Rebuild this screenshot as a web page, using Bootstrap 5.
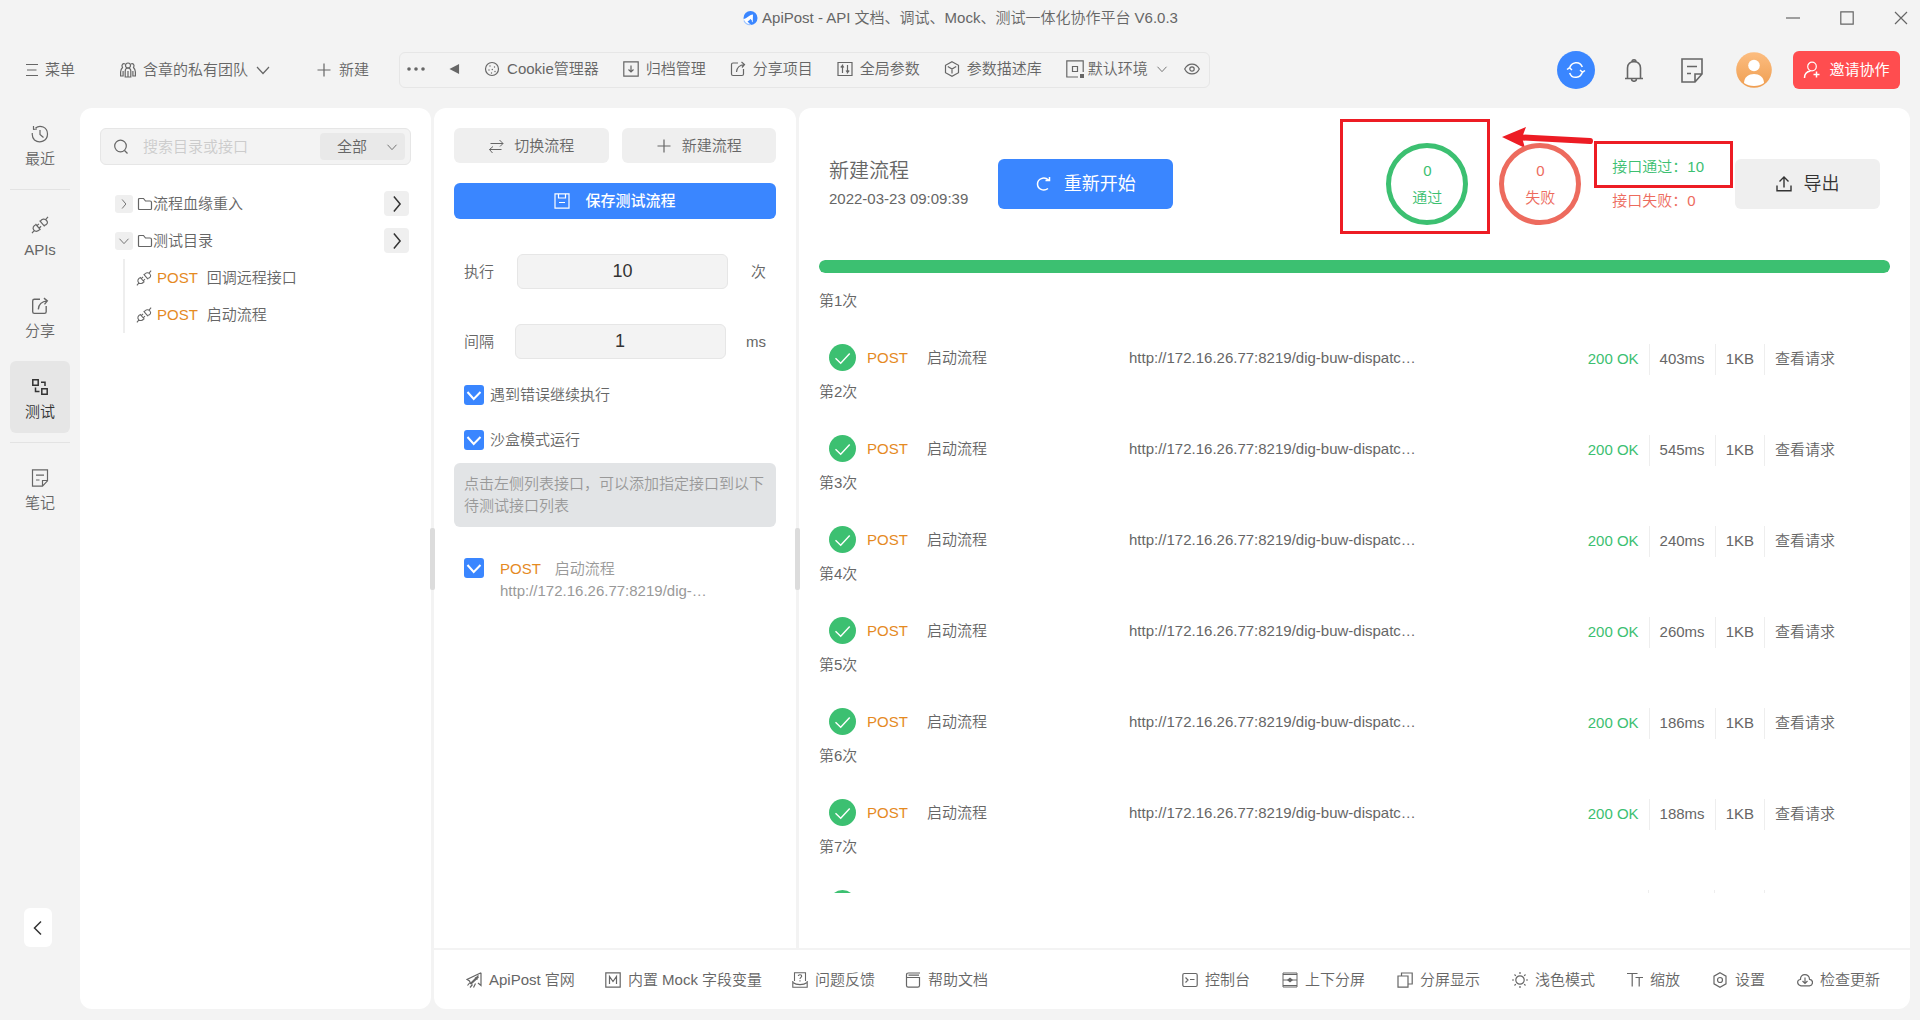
<!DOCTYPE html>
<html lang="zh-CN">
<head>
<meta charset="utf-8">
<meta name="viewport" content="width=device-width, initial-scale=1">
<title>ApiPost - API 文档、调试、Mock、测试一体化协作平台 V6.0.3</title>
<link href="https://cdn.jsdelivr.net/npm/bootstrap@5.3.0/dist/css/bootstrap.min.css" rel="stylesheet">
<style>
:root{--ink:#666;--dark:#333;--bg:#f3f3f3;--soft:#efefef;--line:#e6e6e6;--blue:#3a86ff;--green:#3cc071;--red:#ed6b5e;--orange:#e58a1f;--mark:#ed1c24}
body{font-family:"Liberation Sans","Noto Sans CJK SC",sans-serif;font-size:15px;line-height:22px;font-weight:350;color:var(--ink);background:var(--bg);height:100vh;min-height:700px;overflow:hidden}
button,input,select{font-family:inherit;font-size:inherit;font-weight:inherit;line-height:inherit;color:inherit}
button{border:0;background:none;padding:0;white-space:nowrap}
a{color:inherit;text-decoration:none;white-space:nowrap}
svg{fill:none;stroke:currentColor;stroke-width:1.2;flex:none;display:block}
.ic{width:16px;height:16px}
.titlebar{height:35px}
.winctl{right:12px;top:10px;gap:40px}
.toolbar{height:73px;padding:16px 20px 19px 26px}
.tool{display:inline-flex;align-items:center;gap:7px}
.tool-next{margin-left:45px}
.toolbox{height:36px;border:1px solid var(--line);border-radius:6px;padding:0 9px 2px 7px;margin-left:30px}
.syncbtn{width:38px;height:38px;border-radius:50%;background:var(--blue);color:#fff}
.invite{height:38px;width:107px;border-radius:6px;background:#ff4d4f;color:#fff;gap:8px;font-weight:400}
.rail{width:80px;padding:0 10px;gap:9px}
.railitem{width:60px;height:72px;border-radius:6px;gap:5px;padding-top:6px}
.railitem.active{background:#e6e6e6;color:var(--dark)}
.railitem svg{width:18px;height:18px}
.rail hr{margin:0;width:60px;height:1px;border:0;background:#dedede;opacity:.8}
.foldbtn{width:28px;height:39px;border-radius:6px;background:#fff;margin:auto auto 73px 14px;color:var(--dark)}
.pane{background:#fff;border-radius:12px 12px 0 0;min-height:0;min-width:0}
.pane-tree{width:351px;border-radius:12px;padding:20px}
.pane-flow{width:362px;padding:20px}
.pane-run{padding:35px 20px 55px}
.gutter{width:3px;position:relative;z-index:2}
.gutter span{position:absolute;left:-1px;top:420px;width:5px;height:62px;border-radius:2px;background:#dcdcdc}
.searchbox{height:37px;border:1px solid var(--line);border-radius:6px;background:var(--bg);padding:4px 5px 4px 12px}
.searchbox input{border:0;background:none;outline:0;width:0;min-width:0;padding:0 0 0 14px}
.searchbox input::placeholder{color:#ccc;opacity:1}
.scope{width:85px;height:27px;position:relative;flex:none}
.scope select{appearance:none;border:0;background:#e9e9e9;border-radius:4px;width:100%;height:27px;padding:0 17px}
.scope svg{position:absolute;right:7px;top:8px;pointer-events:none}
.tree{padding:20px 2px 0 15px}
.node{height:37px}
.node .verb{margin:0 9px 0 5px}
.caret{width:18px;height:18px;border-radius:3px;background:var(--soft)}
.more{width:25px;height:25px;border-radius:4px;background:var(--soft);color:var(--dark)}
.kids{border-left:2px solid #eee;margin-left:8px;padding-left:11px}
.verb{color:var(--orange)}
.greybtn{height:35px;border-radius:6px;background:var(--soft);gap:10px}
.savebtn{height:36px;border-radius:6px;background:var(--blue);color:#fff;gap:15px;font-weight:500;margin-top:20px}
.field{margin:35px 10px 0}
.optrow{gap:6px;margin:25px 10px 0}
.numin{width:211px;height:35px;border:1px solid var(--line);border-radius:6px;background:var(--bg);text-align:center;font-size:18px;color:var(--dark);padding:0}
.form-check-input.tick{width:20px;height:20px;margin:0;border:0;border-radius:3px;flex:none;background-size:20px}
.tick:checked{background-color:var(--blue);background-image:url("data:image/svg+xml,%3csvg xmlns='http://www.w3.org/2000/svg' viewBox='0 0 20 20'%3e%3cpath fill='none' stroke='%23fff' stroke-width='2' d='M3.5 7l6.2 7L16.500 7'/%3e%3c/svg%3e")}
.hint{background:#e2e4e6;color:#999;border-radius:6px;padding:10px;margin-top:12px}
.picked{gap:16px;margin:31px 10px 0;color:#999}
.picked .verb{margin-right:14px}
.flowtitle{font-size:20px;line-height:26px}
.bigbtn{height:50px;border-radius:6px;font-size:18px;gap:12px}
.restart{width:175px;background:var(--blue);color:#fff;font-weight:400;margin-left:30px}
.export{width:145px;background:var(--soft);color:var(--dark)}
.runhead{padding:0 10px}
.ring{width:82px;height:82px;border:5px solid;border-radius:50%;gap:5px;position:relative}
.ok{color:var(--green)}
.bad{color:var(--red)}
.statgap{gap:31px}
.stats{gap:12px;white-space:nowrap}
.outline-a,.outline-b{position:absolute;border:3px solid var(--mark)}
.outline-a{left:-51px;top:-29px;width:150px;height:115px}
.outline-b{left:-18px;top:-15px;width:139px;height:47px}
.pointer{position:absolute;left:111px;top:-23px}
.progress.runbar{height:13px;border-radius:6px;margin:35px 0 17px;flex:none}
.runbar .progress-bar{background:var(--green);border-radius:6px}
.rounds{overflow:hidden;min-height:0}
.hit{height:31px;margin:32px 45px 6px 10px;padding-right:10px}
.badgeok{width:27px;height:27px;border-radius:50%;background:var(--green);color:#fff;flex:none}
.reqinfo{padding:3px 0 0 11px;min-width:0}
.reqinfo .verb{width:60px;flex:none}
.reqname{width:202px;flex:none}
.cell{padding:0 10px;border-left:1px solid #eee;height:31px;line-height:30px;white-space:nowrap}
.cell:first-child{border:0}
.cell:last-child{padding-right:0}
.cell:empty{width:66px}
.cell:empty:nth-child(3){width:50px}
.cell:empty:last-child{width:71px}
.statusbar{height:59px;background:#fff;border-radius:0 0 12px 12px;margin-top:2px;padding:0 30px 0 32px}
.statusbar .links{gap:30px}
.statusbar .modes{gap:32px}
.statusbar a,.statusbar button{display:inline-flex;align-items:center;gap:7px}
.work{margin:0 10px 11px 0;min-height:0;min-width:0}
</style>
</head>
<body class="d-flex flex-column">
<svg class="d-none" aria-hidden="true">
  <symbol id="plug" viewBox="0 0 18 18"><path d="M1 17.200l2.600-3M17 .8l-2.600 3M9.300 5.400l3.600 4.200c3.300-.9 4.600-2.900 2.700-5.100s-4.700-1.800-6.300 .9zM8.600 4.600l5 5.800M4.500 8l5 5.800M5.100 8.500c-2.700 1.200-4 3.600-2.200 5.600s4.500 1.300 6-1M6 9.700l1.900-1.900M8.100 12.200l2-1.900"/></symbol>
  <symbol id="folder" viewBox="0 0 16 16"><path d="M1.500 12.500v-9q0-1 1-1h4l2 2.500h4.500q1.500 0 1.500 1.500v6q0 1-1 1h-11q-1 0-1-1z"/></symbol>
  <symbol id="right" viewBox="0 0 16 16"><path d="M5.500 2l5 6-5 6"/></symbol>
  <symbol id="down" viewBox="0 0 16 16"><path d="M2 5l6 6.500L14 5"/></symbol>
  <symbol id="share" viewBox="0 0 16 16"><path d="M8 2H3q-1.500 0-1.500 1.500v9.500q0 1.500 1.500 1.500h9q1.500 0 1.500-1.500V8M6.500 11c.3-4.500 3-7 8-7.500M11.500 1l3 2.500-2.500 3"/></symbol>
  <symbol id="note" viewBox="0 0 18 18"><path d="M1.500 .8h15v11L11.500 17.200h-10zM11.500 17v-5.500h5M5 6.200h8M5 11h3.500"/></symbol>
  <symbol id="plus" viewBox="0 0 16 16"><path d="M8 1.500v13M1.500 8h13"/></symbol>
  <symbol id="check" viewBox="0 0 27 27"><path d="M6.500 14.200l5.200 5L20.700 9.500" stroke-width="1.400"/></symbol>
</svg>

<header>
  <div class="titlebar d-flex align-items-center justify-content-center position-relative">
    <svg class="me-1" width="16" height="16" viewBox="0 0 16 16"><circle cx="8.500" cy="8" r="7" fill="#3a86ff" stroke="none"/><path d="M1.500 9C5 8.500 7 5 11 4.500l-.3 8L8.500 9.500 5.500 11.500l3 3C5 15.500 1.500 13 1.500 9z" fill="#fff" stroke="none"/><path d="M2 10.500a6.500 6.500 0 0 0 7 4" stroke="#9cc3ff"/><path d="M8 9.500l1.500 1.500" stroke="#3a86ff"/></svg>
    <span>ApiPost - API 文档、调试、Mock、测试一体化协作平台 V6.0.3</span>
    <div class="winctl position-absolute d-flex">
      <button aria-label="最小化"><svg width="14" height="16" viewBox="0 0 14 16"><path d="M0 8h14"/></svg></button>
      <button aria-label="最大化"><svg width="14" height="16" viewBox="0 0 14 16"><path d="M.8 1.800h12.400v12.400H.8z"/></svg></button>
      <button aria-label="关闭"><svg width="14" height="16" viewBox="0 0 14 16"><path d="M1 2l12 12M13 2L1 14"/></svg></button>
    </div>
  </div>
  <nav class="toolbar d-flex align-items-center" aria-label="工具栏">
    <button class="tool"><svg width="12" height="14" viewBox="0 0 12 14"><path d="M0 1.500h12M1 7h9.500M0 12.500h12"/></svg>菜单</button>
    <button class="tool tool-next"><svg class="ic" viewBox="0 0 16 16"><circle cx="8" cy="3.500" r="2.500"/><path d="M5.200 15V9c0-4 5.600-4 5.600 0v6zM5 2c-2-1-4 1-2.500 3.500C1 7 .6 8 .6 10v4h2.500V9M11 2c2-1 4 1 2.500 3.500 1.500 1.500 1.900 2.500 1.900 4.500v4h-2.500V9M8 9v6"/></svg>含章的私有团队<svg class="ic" viewBox="0 0 16 16"><use href="#down"/></svg></button>
    <button class="tool tool-next"><svg class="ic" viewBox="0 0 16 16"><use href="#plus"/></svg>新建</button>
    <div class="toolbox d-flex align-items-center">
      <button aria-label="更多"><svg width="18" height="6" viewBox="0 0 18 6"><g fill="currentColor" stroke="none"><circle cx="2" cy="3" r="1.800"/><circle cx="9" cy="3" r="1.800"/><circle cx="16" cy="3" r="1.800"/></g></svg></button>
      <button class="ms-4" aria-label="收起"><svg width="11" height="12" viewBox="0 0 12 12"><path d="M11 .5v11L.5 6z" fill="currentColor" stroke="none"/></svg></button>
      <div class="d-flex ms-4 gap-4">
        <button class="tool"><svg class="ic" viewBox="0 0 16 16"><circle cx="8" cy="8" r="6.500"/><g fill="currentColor" stroke="none"><circle cx="6" cy="5" r=".7"/><circle cx="10.500" cy="6" r=".7"/><circle cx="5" cy="9" r=".7"/><circle cx="8.300" cy="8.500" r=".7"/><circle cx="7.500" cy="12" r=".7"/><circle cx="11" cy="10.500" r=".7"/></g></svg>Cookie管理器</button>
        <button class="tool"><svg class="ic" viewBox="0 0 16 16"><path d="M.8 .8h14.400v14.400H.8zM8 4.500v6.300M5.500 8.500L8 11l2.500-2.500"/></svg>归档管理</button>
        <button class="tool"><svg class="ic" viewBox="0 0 16 16"><use href="#share"/></svg>分享项目</button>
        <button class="tool"><svg class="ic" viewBox="0 0 16 16"><path d="M1 1.500h14v13H1zM5.500 12V4.500L3.800 6.500M5.500 4.500l1.300 2M10.500 4v7.500l1.700-2M10.500 11.500l-1.400-2"/></svg>全局参数</button>
        <button class="tool"><svg class="ic" viewBox="0 0 16 16"><path d="M8 .8l6.500 3.500v7.400L8 15.200l-6.500-3.500V4.300zM3.800 5.500L8 8l4.200-2.500M8 8v4.500"/></svg>参数描述库</button>
        <button class="tool gap-1"><svg width="18" height="18" viewBox="0 0 18 18"><path d="M12 17H.8V.8h16.400V12M6.500 6.500h5v5h-5z"/><path d="M14 14h4v4h-4z" fill="currentColor" stroke="none"/></svg>默认环境<svg class="ms-1" width="12" height="12" viewBox="0 0 16 16"><use href="#down"/></svg></button>
      </div>
      <button class="ms-3" aria-label="查看环境"><svg width="16" height="12" viewBox="0 0 16 12"><path d="M.7 6C4-.5 12-.5 15.300 6 12 12.500 4 12.500 .7 6z"/><circle cx="8" cy="6" r="2.200"/></svg></button>
    </div>
    <div class="ms-auto d-flex align-items-center">
      <button class="syncbtn d-flex align-items-center justify-content-center" aria-label="同步"><svg width="20" height="18" viewBox="0 0 20 18"><path d="M3.500 7.500C5 .5 14-.5 16.300 6M16.500 10.500C15 17.500 6 18.500 3.700 12M1 8.500l2.500-1.700L6 9M19 9.500l-2.500 1.700L14 9" stroke-width="1.500"/></svg></button>
      <button style="margin-left:29px" aria-label="通知"><svg width="20" height="24" viewBox="0 0 20 24"><path d="M1 20.500h18M3.500 20V10c0-8.500 13-8.500 13 0v10M8 4c0-3 4-3 4 0M7.500 21c0 3 5 3 5 0" stroke-width="1.600"/></svg></button>
      <button style="margin-left:37px" aria-label="便签"><svg width="22" height="25" viewBox="0 0 22 25"><path d="M1 1h20v15l-7 8H1zM14 23.500V16h6.500M6 8.500h10M6 15.500h4" stroke-width="1.600"/></svg></button>
      <button style="margin-left:33px" aria-label="账户"><svg width="36" height="36" viewBox="0 0 36 36"><defs><linearGradient id="av" x2="0" y2="1"><stop stop-color="#fcbd80"/><stop offset="1" stop-color="#ef9e51"/></linearGradient></defs><g stroke="none"><circle cx="18" cy="18" r="17.800" fill="url(#av)"/><circle cx="18" cy="13.500" r="5.800" fill="#fff"/><path d="M8 31c0-12 20-12 20 0-5 4-15 4-20 0z" fill="#fff"/></g></svg></button>
      <button class="invite d-flex align-items-center justify-content-center" style="margin-left:21px"><svg width="18" height="18" viewBox="0 0 18 18"><circle cx="9" cy="5.500" r="4.300"/><path d="M1.500 17c0-4 2.500-6.500 6-7M13.500 10.500v6M10.500 13.500h6" stroke-width="1.500"/></svg>邀请协作</button>
    </div>
  </nav>
</header>

<div class="d-flex flex-grow-1" style="min-height:0">
  <nav class="rail d-flex flex-column align-items-center flex-shrink-0" aria-label="主导航">
    <a class="railitem d-flex flex-column align-items-center justify-content-center" href="#"><svg viewBox="0 0 18 18"><path d="M4.500 3C9-.5 16.500 2 16.500 9s-8 10-13 6C1.500 13 1 11 1.300 8M2.500 4.500V1M2 4.500L6 4M9 5v4.500l3.500 3"/></svg>最近</a>
    <hr>
    <a class="railitem d-flex flex-column align-items-center justify-content-center" href="#"><svg viewBox="0 0 18 18"><use href="#plug"/></svg>APIs</a>
    <a class="railitem d-flex flex-column align-items-center justify-content-center" href="#"><svg viewBox="0 0 16 16"><use href="#share"/></svg>分享</a>
    <a class="railitem active d-flex flex-column align-items-center justify-content-center" href="#" aria-current="page"><svg viewBox="0 0 18 18"><path d="M1.800 1.800h5.400v5.400H1.800zM10.800 10.800h5.400v5.400h-5.400zM10 4.200h4V8M4.500 9.500v4H8.500" stroke-width="1.500"/></svg>测试</a>
    <hr>
    <a class="railitem d-flex flex-column align-items-center justify-content-center" href="#"><svg viewBox="0 0 18 18"><use href="#note"/></svg>笔记</a>
    <button class="foldbtn d-flex align-items-center justify-content-center" aria-label="折叠"><svg class="ic" viewBox="0 0 16 16"><path d="M11 1.500L4.500 8l6.500 6.500" stroke-width="1.500"/></svg></button>
  </nav>

  <div class="work d-flex flex-grow-1">
    <aside class="pane pane-tree flex-shrink-0">
      <div class="searchbox d-flex align-items-center">
        <svg class="ic" viewBox="0 0 16 16"><circle cx="7.500" cy="7" r="5.800"/><path d="M11.500 11.500L14.500 14.500"/></svg>
        <input class="flex-grow-1" type="text" placeholder="搜索目录或接口" aria-label="搜索目录或接口">
        <div class="scope"><select aria-label="范围"><option>全部</option></select><svg width="12" height="12" viewBox="0 0 16 16"><use href="#down"/></svg></div>
      </div>
      <div class="tree">
        <div class="node d-flex align-items-center">
          <button class="caret d-flex align-items-center justify-content-center me-1" aria-label="展开"><svg width="12" height="12" viewBox="0 0 16 16"><use href="#right"/></svg></button>
          <svg class="ic" viewBox="0 0 16 16"><use href="#folder"/></svg><span>流程血缘重入</span>
          <button class="more ms-auto d-flex align-items-center justify-content-center" aria-label="添加"><svg width="20" height="20" viewBox="0 0 16 16"><use href="#right"/></svg></button>
        </div>
        <div class="node d-flex align-items-center">
          <button class="caret d-flex align-items-center justify-content-center me-1" aria-label="收起"><svg width="12" height="12" viewBox="0 0 16 16"><use href="#down"/></svg></button>
          <svg class="ic" viewBox="0 0 16 16"><use href="#folder"/></svg><span>测试目录</span>
          <button class="more ms-auto d-flex align-items-center justify-content-center" aria-label="添加"><svg width="20" height="20" viewBox="0 0 16 16"><use href="#right"/></svg></button>
        </div>
        <div class="kids">
          <a class="node d-flex align-items-center" href="#"><svg class="ic" viewBox="0 0 18 18"><use href="#plug"/></svg><span class="verb">POST</span>回调远程接口</a>
          <a class="node d-flex align-items-center" href="#"><svg class="ic" viewBox="0 0 18 18"><use href="#plug"/></svg><span class="verb">POST</span>启动流程</a>
        </div>
      </div>
    </aside>
    <div class="gutter flex-shrink-0"><span></span></div>

    <div class="d-flex flex-column flex-grow-1" style="min-width:0">
      <div class="d-flex flex-grow-1" style="min-height:0">
        <section class="pane pane-flow flex-shrink-0">
          <div class="d-flex" style="gap:13px">
            <button class="greybtn d-flex flex-fill align-items-center justify-content-center"><svg class="ic" viewBox="0 0 16 16"><path d="M2.500 5.500h12.500L11.500 2M15 5.500L12 8.500M13.500 11.500H1.500L5 8.500M1.500 11.500l3 3.500" stroke-width="1"/></svg>切换流程</button>
            <button class="greybtn d-flex flex-fill align-items-center justify-content-center"><svg class="ic" viewBox="0 0 16 16"><use href="#plus"/></svg>新建流程</button>
          </div>
          <button class="savebtn w-100 d-flex align-items-center justify-content-center"><svg class="ic" viewBox="0 0 16 16"><path d="M1 .8h14v14.400H1zM4.500 1v4h7V1M5 9.500h6"/></svg>保存测试流程</button>
          <div class="field d-flex align-items-center justify-content-between"><label for="times">执行</label><input id="times" class="numin" type="text" value="10"><span>次</span></div>
          <div class="field d-flex align-items-center justify-content-between"><label for="delay">间隔</label><input id="delay" class="numin" type="text" value="1"><span>ms</span></div>
          <div class="optrow d-flex align-items-center"><input class="form-check-input tick" type="checkbox" id="go" checked><label for="go">遇到错误继续执行</label></div>
          <div class="optrow d-flex align-items-center" style="margin-top:23px"><input class="form-check-input tick" type="checkbox" id="box" checked><label for="box">沙盒模式运行</label></div>
          <div class="hint">点击左侧列表接口，可以添加指定接口到以下待测试接口列表</div>
          <div class="picked d-flex align-items-start"><input class="form-check-input tick" type="checkbox" id="api1" checked><label for="api1"><span class="verb">POST</span>启动流程<br>http://172.16.26.77:8219/dig-…</label></div>
        </section>
        <div class="gutter flex-shrink-0"><span></span></div>

        <main class="pane pane-run flex-grow-1 d-flex flex-column">
          <div class="runhead d-flex align-items-center">
            <div class="text-nowrap"><div class="flowtitle mb-1">新建流程</div><div>2022-03-23 09:09:39</div></div>
            <button class="bigbtn restart d-flex align-items-center justify-content-center"><svg class="ic" viewBox="0 0 16 16"><path d="M12.500 4C8 0 1.500 3 1.500 8s6 8 10.500 4.500M9.500 4.500h4V1" stroke-width="1.500"/></svg>重新开始</button>
            <div class="ms-auto d-flex align-items-center statgap">
              <div class="ring ok d-flex flex-column align-items-center justify-content-center"><span>0</span><span>通过</span>
                <span class="outline-a"></span>
                <svg class="pointer" width="94" height="26" viewBox="0 0 94 26"><path d="M20 12.500L88 16" stroke="#ed1c24" stroke-width="6" stroke-linecap="round"/><path d="M0 12L24 2l-4 10.500L23 23z" fill="#ed1c24" stroke="none"/></svg>
              </div>
              <div class="ring bad d-flex flex-column align-items-center justify-content-center"><span>0</span><span>失败</span></div>
              <div class="stats d-flex flex-column position-relative"><span class="ok">接口通过：10</span><span class="bad">接口失败：0</span><span class="outline-b"></span></div>
              <button class="bigbtn export d-flex align-items-center justify-content-center"><svg class="ic" viewBox="0 0 16 16"><path d="M1 9.500v5.300h14V9.500M8 11.500V1.500M3.500 5.500L8 1l4.500 4.500" stroke-width="1.400"/></svg>导出</button>
            </div>
          </div>
          <div class="progress runbar" role="progressbar" aria-valuenow="100" aria-valuemin="0" aria-valuemax="100" aria-label="进度"><div class="progress-bar" style="width:100%"></div></div>
          <div class="rounds flex-grow-1" id="rounds"></div>
        </main>
      </div>

      <footer class="statusbar d-flex align-items-center justify-content-between flex-shrink-0">
        <div class="links d-flex">
          <a href="#"><svg class="ic" viewBox="0 0 16 16"><path d="M15 .8L1 7.500l2.500 1.500 1 2.500L12.500 3.500M15 .8V13.500l-3-2.500M5 12l7.500-7M3.500 11L1.500 13.500M6.500 12.500L4 15.500M9.500 11.500L7.500 15.500M9 5.500l2.500 2"/></svg>ApiPost 官网</a>
          <a href="#"><svg class="ic" viewBox="0 0 16 16"><path d="M.8 .8h14.400v14.400H.8zM4.500 12V4.500L8 9.500l3.500-5V12"/></svg>内置 Mock 字段变量</a>
          <a href="#"><svg class="ic" viewBox="0 0 16 16"><path d="M2.500 9V.8h11V9M.8 9v6.200h14.400V9M.8 10.500c4 2.800 10.400 2.800 14.400 0M6.200 4c.3-1.800 3.600-1.600 3.500 .2C9.600 5.500 8 5.300 8 7M8 8.200v1.200" stroke-width="1.100"/></svg>问题反馈</a>
          <a href="#"><svg class="ic" viewBox="0 0 16 16"><path d="M15 1H3.500q-2 0-2 2v10.500q0 1.700 1.700 1.700h9.600q1.700 0 1.700-1.700V5.500h-13M3.500 3.200H14"/></svg>帮助文档</a>
        </div>
        <div class="modes d-flex">
          <button><svg class="ic" viewBox="0 0 16 16"><rect x=".8" y="1.500" width="14.400" height="13" rx="1.500"/><path d="M3.500 5.500L6 8l-2.500 2.500M8 7.500h4.500"/></svg>控制台</button>
          <button><svg class="ic" viewBox="0 0 16 16"><path d="M1 1h14v14H1zM1 8h14M1 2.500h14M1 13.500h14" stroke-width="1"/><path d="M8 5.500l3 2.500-3 2.500L5 8z" fill="currentColor" stroke="none"/></svg>上下分屏</button>
          <button><svg class="ic" viewBox="0 0 16 16"><path d="M1 4h10v11.200H1zM4.500 4V1h10.700v11H11"/></svg>分屏显示</button>
          <button><svg class="ic" viewBox="0 0 16 16"><circle cx="8" cy="8" r="4.200"/><path d="M8 0v2M8 14v2M0 8h2M14 8h2M2.500 2.500l1.300 1.300M12.200 12.200l1.300 1.300M13.500 2.500l-1.300 1.300M3.800 12.200l-1.300 1.300"/></svg>浅色模式</button>
          <button><svg class="ic" viewBox="0 0 16 16"><path d="M0 1.500h10.500M5.200 1.500v13M8.500 5.500H16M12.200 5.500v9"/></svg>缩放</button>
          <button><svg class="ic" viewBox="0 0 16 16"><path d="M8 .7l6 3.500v7.600l-6 3.500-6-3.500V4.200z"/><circle cx="8" cy="8" r="2.500"/></svg>设置</button>
          <button><svg class="ic" viewBox="0 0 16 16"><path d="M4 13.800C-.5 13-.3 7.500 3.500 7.500 3 1 12.500 1 12.500 7.300c4 .2 4 6 0 6.500zM8 5.500v6M5.500 9L8 11.500 10.500 9"/></svg>检查更新</button>
        </div>
      </footer>
    </div>
  </div>
</div>
<script>
// One block per round: the heading, then the request that ran in it.
const times = [403, 545, 240, 260, 186, 188, null];
document.getElementById('rounds').innerHTML = times.map((ms, i) => `
  <div>第${i + 1}次</div>
  <div class="hit d-flex align-items-start">
    <span class="badgeok"><svg width="27" height="27"><use href="#check"/></svg></span>
    <div class="reqinfo d-flex flex-grow-1">${ms ? '<span class="verb">POST</span><span class="reqname">启动流程</span><span class="text-nowrap">http://172.16.26.77:8219/dig-buw-dispatc…</span>' : ''}</div>
    <div class="d-flex flex-shrink-0">${ms ? `<span class="cell ok">200 OK</span><span class="cell">${ms}ms</span><span class="cell">1KB</span><a class="cell" href="#">查看请求</a>` : '<span class="cell"></span>'.repeat(4)}</div>
  </div>`).join('');
</script>
<script src="https://cdn.jsdelivr.net/npm/bootstrap@5.3.0/dist/js/bootstrap.bundle.min.js"></script>
</body>
</html>
